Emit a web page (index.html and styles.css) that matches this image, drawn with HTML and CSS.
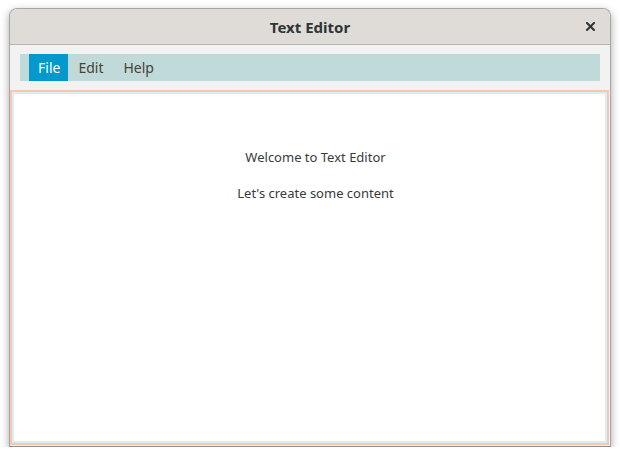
FILE: index.html
```html
<!DOCTYPE html>
<html>
<head>
<meta charset="utf-8">
<link rel="stylesheet" href="styles.css">
</head>
<body>
<div class="window">
  <div class="titlebar">
    <span class="title">Text Editor</span>
    <span class="close">
      <svg width="9" height="9" viewBox="0 0 9 9"><path d="M1 1L8 8M8 1L1 8" stroke="#2e3436" stroke-width="2" stroke-linecap="square"/></svg>
    </span>
  </div>
  <div class="body">
    <div class="menubar">
      <span class="menu-item active">File</span>
      <span class="menu-item">Edit</span>
      <span class="menu-item">Help</span>
    </div>
    <div class="content">
      <div class="inner">
        <p class="line">Welcome to Text Editor</p>
        <p class="line">Let's create some content</p>
      </div>
    </div>
  </div>
</div>
</body>
</html>
```
FILE: styles.css
```css
html, body {
  margin: 0;
  padding: 0;
  background: #ffffff;
}
body {
  padding: 8px 9px 0 9px;
  font-family: "Noto Sans", "Open Sans", sans-serif;
}
.window {
  width: 600px;
  height: 437px;
  border: 1px solid #a8a6a4;
  border-bottom-color: #8e8e8e;
  border-radius: 8px 8px 0 0;
  box-shadow: 0 3px 9px rgba(0,0,0,0.35);
  display: flex;
  flex-direction: column;
  overflow: hidden;
  background: #f2f2f2;
}
.titlebar {
  height: 35px;
  flex: none;
  background: #dfdcd8;
  border-bottom: 1px solid #b8b5b1;
  position: relative;
  display: flex;
  align-items: center;
  justify-content: center;
}
.title {
  font-weight: bold;
  font-size: 15px;
  color: #2e3436;
}
.close {
  position: absolute;
  right: 15px;
  top: 13px;
  width: 9px;
  height: 9px;
  display: flex;
}
.body {
  flex: 1;
  display: flex;
  flex-direction: column;
  padding: 9px 0 1px 0;
  gap: 9px;
}
.menubar {
  margin: 0 10px;
  height: 27px;
  background: #c0dada;
  display: flex;
  align-items: stretch;
  padding-left: 9px;
}
.menu-item {
  display: flex;
  align-items: center;
  padding: 0 10px;
  font-size: 14px;
  color: #4a4036;
}
.menu-item.active {
  padding: 0 8px 0 9px;
  background: #0399cc;
  color: #ffffff;
}
.content {
  flex: 1;
  margin-right: 1px;
  border: 2px solid #f9c7ab;
  background: #ffffff;
}
.inner {
  height: 100%;
  box-sizing: border-box;
  border: 2px solid #d7eef5;
  display: flex;
  flex-direction: column;
  align-items: center;
  padding: 54px 0 0 12px;
  gap: 18px;
}
.line {
  margin: 0;
  font-size: 13px;
  line-height: 18px;
  color: #3a3a3a;
}
```
